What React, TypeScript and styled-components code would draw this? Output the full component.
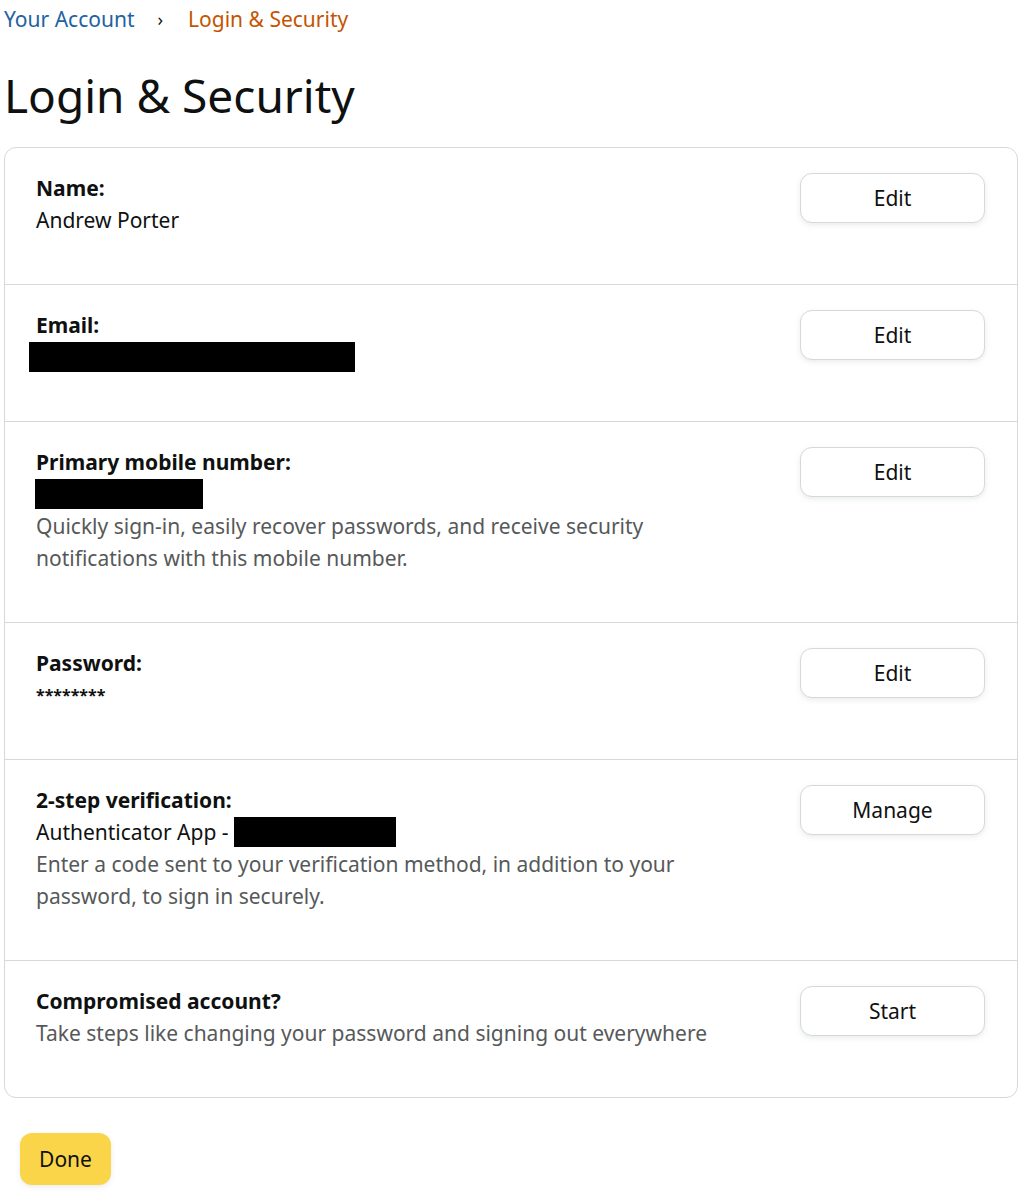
import React from "react";
import styled, { createGlobalStyle } from "styled-components";

const GlobalStyle = createGlobalStyle`
  body {
    margin: 0;
    background: #fff;
    font-family: "Noto Sans", "Open Sans", Arial, sans-serif;
    color: #0f1111;
  }
`;

type row = {
  label: string;
  button: string;
  value?: React.ReactNode;
  note?: string;
};

const Page = styled.div`
  padding: 0 4px 40px;
`;

const Breadcrumb = styled.div`
  display: flex;
  align-items: center;
  height: 38px;
  font-size: 21px;
`;

const Crumb = styled.a`
  color: #2162a1;
  text-decoration: none;
`;

const Sep = styled.span`
  margin: 0 25px 0 23px;
  color: #0f1111;
  font-size: 18px;
`;

const Current = styled.span`
  color: #c45500;
`;

const Title = styled.h1`
  margin: 27px 0 22px;
  font-size: 46px;
  line-height: 60px;
  font-weight: 400;
`;

const Card = styled.div`
  border: 1px solid #d5d9d9;
  border-radius: 12px;
`;

const Row = styled.div`
  display: flex;
  justify-content: space-between;
  align-items: flex-start;
  padding: 24px 32px 48px 31px;
  border-bottom: 1px solid #d5d9d9;
  &:last-child {
    border-bottom: none;
  }
`;

const Info = styled.div`
  display: flex;
  flex-direction: column;
  font-size: 21px;
  line-height: 32px;
  max-width: 680px;
`;

const Label = styled.div`
  font-weight: 700;
  height: 32px;
`;

const Value = styled.div`
  display: flex;
  align-items: center;
  height: 32px;
  color: #0f1111;
  white-space: pre;
`;

const Stars = styled.span`
  font-size: 16px;
  font-weight: 700;
`;

const Note = styled.div`
  color: #565959;
`;

const Redacted = styled.span<{ w: number; shift?: number }>`
  display: block;
  flex-shrink: 0;
  width: ${(p) => p.w}px;
  height: 30px;
  background: #000;
  margin-left: ${(p) => p.shift || 0}px;
`;

const Button = styled.button`
  width: 185px;
  height: 50px;
  margin-top: 1px;
  flex-shrink: 0;
  background: #fff;
  border: 1px solid #d5d9d9;
  border-radius: 12px;
  box-shadow: 0 2px 5px 0 rgba(213, 217, 217, 0.5);
  font-family: inherit;
  font-size: 21px;
  color: #0f1111;
  cursor: pointer;
`;

const Done = styled.button`
  display: block;
  margin: 35px 0 0 16px;
  width: 91px;
  height: 52px;
  background: #fad54a;
  border: none;
  border-radius: 12px;
  box-shadow: 0 2px 5px 0 rgba(213, 217, 217, 0.5);
  font-family: inherit;
  font-size: 21px;
  color: #0f1111;
  cursor: pointer;
`;

const rows: row[] = [
  { label: "Name:", button: "Edit", value: "Andrew Porter" },
  { label: "Email:", button: "Edit", value: <Redacted w={326} shift={-7} /> },
  {
    label: "Primary mobile number:",
    button: "Edit",
    value: <Redacted w={168} shift={-1} />,
    note: "Quickly sign-in, easily recover passwords, and receive security notifications with this mobile number.",
  },
  { label: "Password:", button: "Edit", value: <Stars>********</Stars> },
  {
    label: "2-step verification:",
    button: "Manage",
    value: (
      <>
        {"Authenticator App - "}
        <Redacted w={162} />
      </>
    ),
    note: "Enter a code sent to your verification method, in addition to your password, to sign in securely.",
  },
  {
    label: "Compromised account?",
    button: "Start",
    note: "Take steps like changing your password and signing out everywhere",
  },
];

const App: React.FC = () => {
  return (
    <Page>
      <GlobalStyle />
      <Breadcrumb>
        <Crumb href="#account">Your Account</Crumb>
        <Sep>›</Sep>
        <Current>Login &amp; Security</Current>
      </Breadcrumb>
      <Title>Login &amp; Security</Title>
      <Card>
        {rows.map((r) => (
          <Row key={r.label}>
            <Info>
              <Label>{r.label}</Label>
              {r.value && <Value>{r.value}</Value>}
              {r.note && <Note>{r.note}</Note>}
            </Info>
            <Button>{r.button}</Button>
          </Row>
        ))}
      </Card>
      <Done>Done</Done>
    </Page>
  );
};
export default App;
